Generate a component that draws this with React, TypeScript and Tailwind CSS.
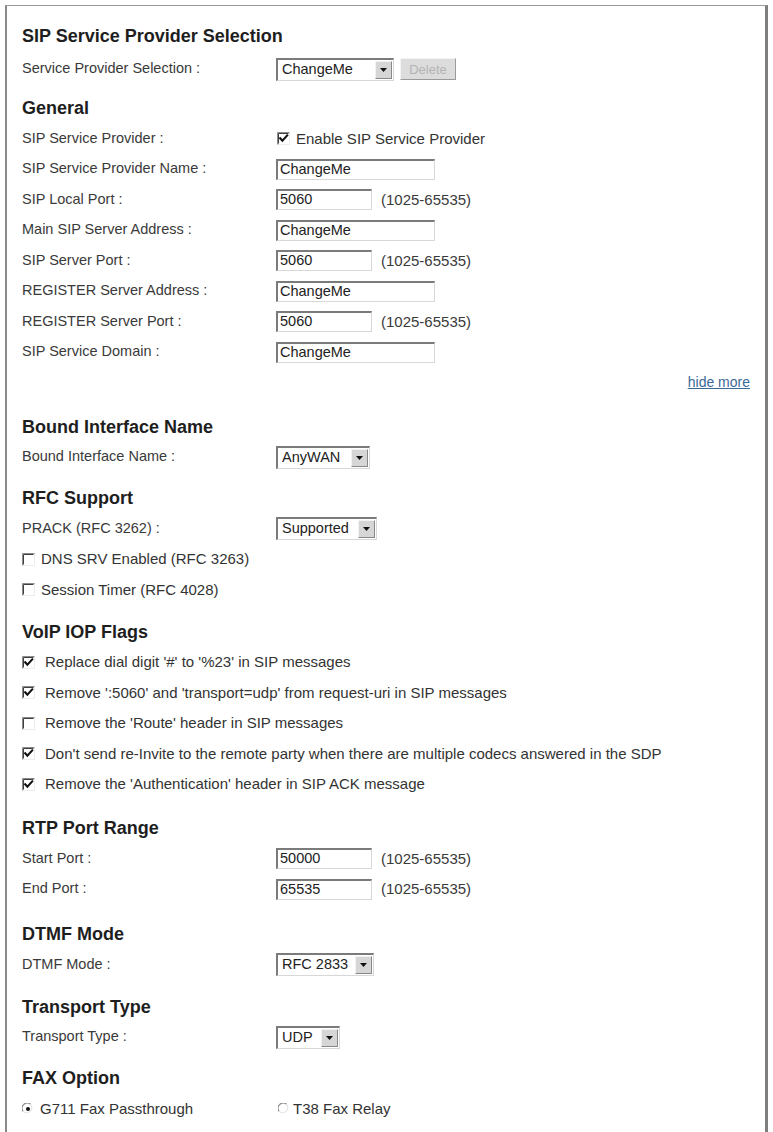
import React from "react";

const FONT = "font-['Liberation_Sans',Arial,sans-serif]";

function CheckBox({ checked }: { checked: boolean }) {
  return (
    <svg width="13" height="13" viewBox="0 0 13 13" className="shrink-0">
      <rect x="0" y="0" width="13" height="13" fill="#ffffff" />
      <path d="M0.5 12.5 V0.5 H12.5" stroke="#8a8a8a" strokeWidth="1" fill="none" />
      <path d="M1.5 11.5 V1.5 H11.5" stroke="#404040" strokeWidth="1" fill="none" />
      <path d="M1 12.5 H12.5 V1" stroke="#ececec" strokeWidth="1" fill="none" />
      {checked && (
        <path
          d="M3.2 6.2 L5.4 8.6 L10.2 3.4"
          stroke="#111111"
          strokeWidth="2.1"
          fill="none"
          strokeLinecap="square"
        />
      )}
    </svg>
  );
}

function Radio({ checked }: { checked: boolean }) {
  return (
    <svg width="12" height="12" viewBox="0 0 12 12" className="shrink-0">
      <circle cx="6" cy="6" r="5.5" fill="#ffffff" />
      <path d="M1.2 8.5 A5.2 5.2 0 0 1 8.5 1.2" stroke="#8a8a8a" strokeWidth="1.2" fill="none" />
      <path d="M8.5 1.2 A5.2 5.2 0 0 1 1.2 8.5" stroke="#e6e6e6" strokeWidth="1.2" fill="none" />
      {checked && <circle cx="6" cy="6" r="2" fill="#111111" />}
    </svg>
  );
}

function Field({ value, wide }: { value: string; wide?: boolean }) {
  return (
    <div
      className={`${wide ? "w-[159px]" : "w-[96px]"} h-[21px] border-t-2 border-l-2 border-b border-r border-t-[#7b7b7b] border-l-[#7b7b7b] border-b-[#d8d8d8] border-r-[#d8d8d8] bg-white flex items-center pl-[2px] text-[14.5px] text-[#222]`}
    >
      {value}
    </div>
  );
}

function Dropdown({ value, width }: { value: string; width: string }) {
  return (
    <div
      className={`${width} h-[23px] border-t-2 border-l-2 border-b border-r border-t-[#7b7b7b] border-l-[#7b7b7b] border-b-[#d8d8d8] border-r-[#d8d8d8] bg-white flex items-center pl-[4px] pr-[1px] text-[14.5px] text-[#222]`}
    >
      <span className="flex-1 whitespace-nowrap overflow-hidden">{value}</span>
      <span className="w-[17px] h-[18px] bg-[#d6d6d6] border-t border-l border-[#f2f2f2] border-b border-r border-b-[#888] border-r-[#888] flex items-center justify-center">
        <svg width="7" height="4" viewBox="0 0 7 4">
          <path d="M0 0 H7 L3.5 4 Z" fill="#111" />
        </svg>
      </span>
    </div>
  );
}

function Row({
  label,
  children,
  className = "",
}: {
  label: string;
  children: React.ReactNode;
  className?: string;
}) {
  return (
    <div className={`flex items-center h-[30.5px] ${className}`}>
      <div className="w-[254px] shrink-0 text-[14.5px] text-[#3a3a3a] whitespace-nowrap">
        {label}
      </div>
      <div className="flex items-center">{children}</div>
    </div>
  );
}

function Range() {
  return <span className="ml-[9px] text-[15px] text-[#3a3a3a]">(1025-65535)</span>;
}

function Heading({ title, className = "" }: { title: string; className?: string }) {
  return (
    <div className={`h-[30px] flex items-center text-[18px] font-bold text-[#1e1e1e] ${className}`}>
      {title}
    </div>
  );
}

function CheckLine({
  checked,
  text,
  gap,
}: {
  checked: boolean;
  text: string;
  gap: string;
}) {
  return (
    <div className="flex items-center h-[30.5px]">
      <CheckBox checked={checked} />
      <span className={`${gap} text-[15px] text-[#333] whitespace-nowrap`}>{text}</span>
    </div>
  );
}

export default function App() {
  const flags: [boolean, string][] = [
    [true, "Replace dial digit '#' to '%23' in SIP messages"],
    [true, "Remove ':5060' and 'transport=udp' from request-uri in SIP messages"],
    [false, "Remove the 'Route' header in SIP messages"],
    [true, "Don't send re-Invite to the remote party when there are multiple codecs answered in the SDP"],
    [true, "Remove the 'Authentication' header in SIP ACK message"],
  ];

  return (
    <div className={`w-[773px] h-[1132px] bg-white overflow-hidden ${FONT}`}>
      <div className="ml-[5px] mt-[5px] w-[763px] h-[1140px] border-t border-l-2 border-r-[3px] border-t-[#9a9a9a] border-l-[#8a8a8a] border-r-[#7e7e7e] pl-[15px] pt-[15px]">
        <Heading title="SIP Service Provider Selection" />
        <Row label="Service Provider Selection :" className="mt-[3px]">
          <Dropdown value="ChangeMe" width="w-[118px]" />
          <div className="ml-[6px] w-[56px] h-[22px] bg-[#dcdcdc] border border-t-[#f4f4f4] border-l-[#f4f4f4] border-b-[#9a9a9a] border-r-[#9a9a9a] flex items-center justify-center text-[13px] text-[#b4b4b4]">
            Delete
          </div>
        </Row>

        <Heading title="General" className="mt-[9px]" />
        <Row label="SIP Service Provider :">
          <div className="flex items-center pl-[1px]">
            <CheckBox checked />
            <span className="ml-[6px] text-[15px] text-[#333]">Enable SIP Service Provider</span>
          </div>
        </Row>
        <Row label="SIP Service Provider Name :">
          <Field value="ChangeMe" wide />
        </Row>
        <Row label="SIP Local Port :">
          <Field value="5060" />
          <Range />
        </Row>
        <Row label="Main SIP Server Address :">
          <Field value="ChangeMe" wide />
        </Row>
        <Row label="SIP Server Port :">
          <Field value="5060" />
          <Range />
        </Row>
        <Row label="REGISTER Server Address :">
          <Field value="ChangeMe" wide />
        </Row>
        <Row label="REGISTER Server Port :">
          <Field value="5060" />
          <Range />
        </Row>
        <Row label="SIP Service Domain :">
          <Field value="ChangeMe" wide />
        </Row>
        <div className="h-[30.5px] flex items-center justify-end pr-[15px]">
          <a className="text-[14px] text-[#3b6a96] underline">hide more</a>
        </div>

        <Heading title="Bound Interface Name" className="mt-[14px]" />
        <Row label="Bound Interface Name :">
          <Dropdown value="AnyWAN" width="w-[94px]" />
        </Row>

        <Heading title="RFC Support" className="mt-[11px]" />
        <Row label="PRACK (RFC 3262) :">
          <Dropdown value="Supported" width="w-[101px]" />
        </Row>
        <CheckLine checked={false} text="DNS SRV Enabled (RFC 3263)" gap="ml-[6px]" />
        <CheckLine checked={false} text="Session Timer (RFC 4028)" gap="ml-[6px]" />

        <Heading title="VoIP IOP Flags" className="mt-[12px]" />
        {flags.map(([c, t]) => (
          <CheckLine key={t} checked={c} text={t} gap="ml-[10px]" />
        ))}

        <Heading title="RTP Port Range" className="mt-[14px]" />
        <Row label="Start Port :">
          <Field value="50000" />
          <Range />
        </Row>
        <Row label="End Port :">
          <Field value="65535" />
          <Range />
        </Row>

        <Heading title="DTMF Mode" className="mt-[15px]" />
        <Row label="DTMF Mode :">
          <Dropdown value="RFC 2833" width="w-[98px]" />
        </Row>

        <Heading title="Transport Type" className="mt-[12px]" />
        <Row label="Transport Type :">
          <Dropdown value="UDP" width="w-[64px]" />
        </Row>

        <Heading title="FAX Option" className="mt-[11px]" />
        <div className="flex items-center h-[30.5px]">
          <div className="w-[256px] flex items-center">
            <Radio checked />
            <span className="ml-[6px] text-[15px] text-[#333]">G711 Fax Passthrough</span>
          </div>
          <Radio checked={false} />
          <span className="ml-[3px] text-[15px] text-[#333]">T38 Fax Relay</span>
        </div>
      </div>
    </div>
  );
}
